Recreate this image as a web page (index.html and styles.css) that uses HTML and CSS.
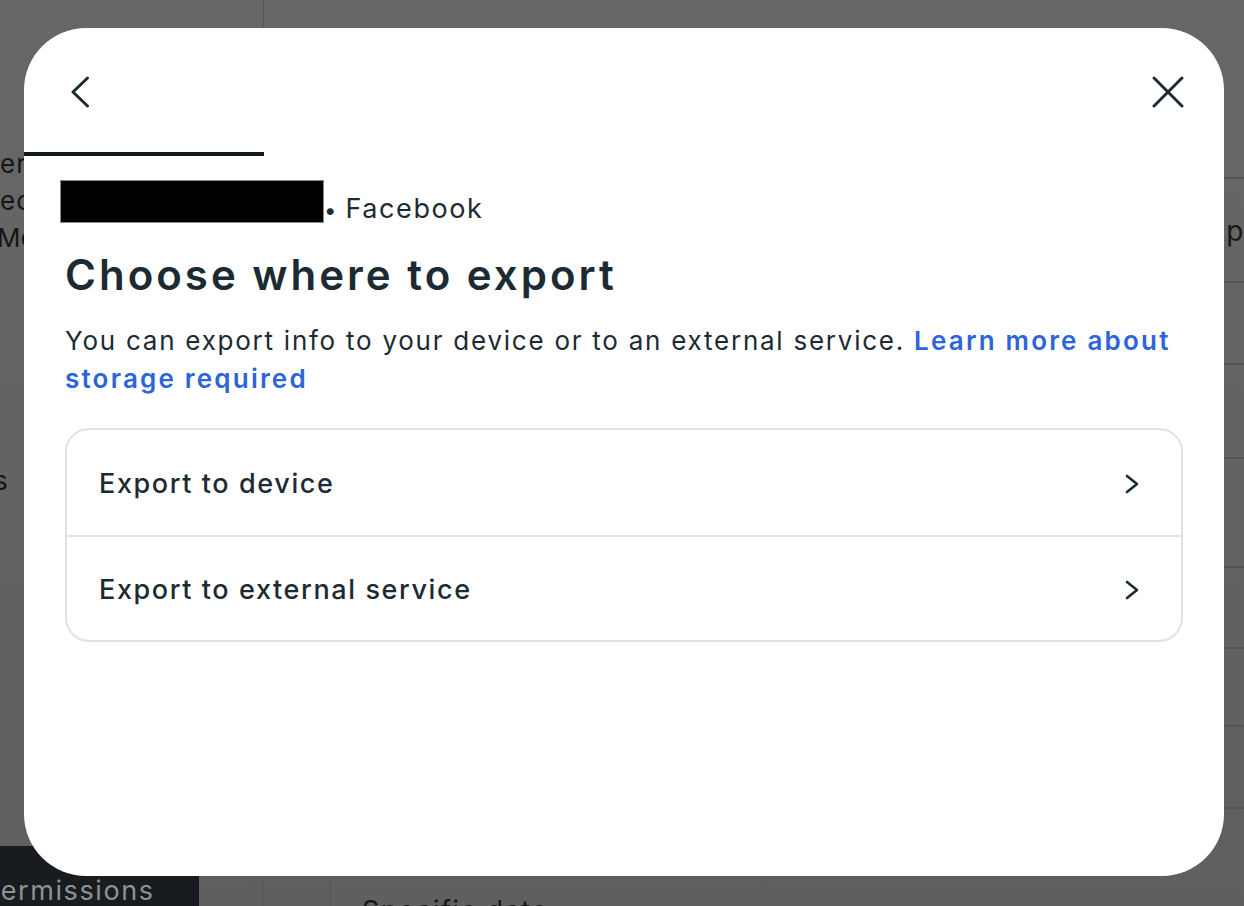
FILE: index.html
```html
<!DOCTYPE html>
<html lang="en">
<head>
<meta charset="utf-8">
<title>Choose where to export</title>
<link rel="stylesheet" href="styles.css">
</head>
<body>
<div class="page">
  <aside class="sidebar">
    <div class="side-text">
      <p class="side-line">ers, pages and</p>
      <p class="side-line">ected experiences</p>
      <p class="side-line side-me">Meta technologies</p>
    </div>
    <p class="side-line side-s">s</p>
    <div class="side-active">Permissions</div>
  </aside>
  <div class="rail"><div class="rail-line"></div></div>
  <main class="main">
    <div class="main-foot">Specific date</div>
  </main>
  <div class="edge">
    <div class="edge-row r1">xp</div>
    <div class="edge-row r2"></div>
    <div class="edge-row r3"></div>
    <div class="edge-row r4"></div>
    <div class="edge-row r5"></div>
    <div class="edge-row r6"></div>
    <div class="edge-row r7"></div>
    <div class="edge-row r8"></div>
  </div>
</div>

<div class="modal" role="dialog" aria-label="Choose where to export">
  <div class="modal-head">
    <button class="icon-btn back" aria-label="Back">
      <svg width="20" height="32" viewBox="0 0 20 32"><path d="M17.5 2 L3 16 L17.5 30" fill="none" stroke="#1c2b33" stroke-width="3" stroke-linecap="round" stroke-linejoin="round"/></svg>
    </button>
    <button class="icon-btn close" aria-label="Close">
      <svg width="32" height="32" viewBox="0 0 32 32"><path d="M2 2 L30 30 M30 2 L2 30" fill="none" stroke="#1c2b33" stroke-width="3" stroke-linecap="round"/></svg>
    </button>
  </div>
  <div class="progress"><div class="progress-fill"></div></div>
  <div class="modal-body">
    <div class="account"><span class="redacted"></span><span class="account-app"><span class="dot">•</span>Facebook</span></div>
    <h1 class="title">Choose where to export</h1>
    <p class="desc">You can export info to your device or to an external service. <a class="link" href="#">Learn more about storage required</a></p>
    <ul class="options">
      <li class="option">
        <span class="option-label">Export to device</span>
        <svg class="chev" width="14" height="20" viewBox="0 0 14 20"><path d="M2 2 L12 10 L2 18" fill="none" stroke="#1c2b33" stroke-width="2.6" stroke-linecap="round" stroke-linejoin="round"/></svg>
      </li>
      <li class="option">
        <span class="option-label">Export to external service</span>
        <svg class="chev" width="14" height="20" viewBox="0 0 14 20"><path d="M2 2 L12 10 L2 18" fill="none" stroke="#1c2b33" stroke-width="2.6" stroke-linecap="round" stroke-linejoin="round"/></svg>
      </li>
    </ul>
  </div>
</div>
</body>
</html>
```

FILE: styles.css
```css
* { box-sizing: border-box; }
html, body { margin: 0; padding: 0; }
body {
  width: 1244px;
  height: 906px;
  overflow: hidden;
  background: #636363;
  font-family: Inter, "Noto Sans", sans-serif;
  position: relative;
}

/* background page (dimmed) */
.page {
  display: flex;
  width: 1244px;
  height: 906px;
  background: linear-gradient(180deg, #676767 0%, #5f5f5f 100%);
}
.sidebar {
  width: 264px;
  flex: none;
  border-right: 1px solid #575757;
  display: flex;
  flex-direction: column;
  overflow: hidden;
}
.side-text { padding-top: 145px; }
.side-line {
  margin: 0;
  font-size: 26px;
  line-height: 37px;
  color: #161616;
  white-space: nowrap;
  letter-spacing: 1px;
}
.side-me { margin-left: -3px; letter-spacing: 0; }
.side-s { margin-top: 206px; margin-left: -6px; }
.side-active {
  margin-top: auto;
  width: 199px;
  height: 60px;
  background: #181b1f;
  color: #8e9296;
  font-size: 27px;
  letter-spacing: 1.6px;
  padding-top: 28px;
  text-indent: -18px;
  white-space: nowrap;
  overflow: hidden;
}
.rail {
  width: 67px;
  flex: none;
  display: flex;
  flex-direction: column;
  justify-content: flex-end;
}
.rail-line {
  height: 60px;
  border-right: 1px solid #555;
}
.main {
  flex: 1;
  display: flex;
  flex-direction: column;
  justify-content: flex-end;
}
.main-foot {
  height: 26px;
  padding-left: 31px;
  padding-top: 16px;
  font-size: 27px;
  line-height: 30px;
  letter-spacing: 1.5px;
  color: #151515;
  white-space: nowrap;
  overflow: hidden;
}
.edge {
  width: 20px;
  flex: none;
  padding-top: 177px;
  display: flex;
  flex-direction: column;
  overflow: hidden;
}
.edge-row {
  border-top: 2px solid #545454;
  flex: none;
}
.r1 {
  height: 104px;
  font-size: 28px;
  line-height: 104px;
  color: #161616;
  text-indent: -14px;
  white-space: nowrap;
  letter-spacing: 1px;
}
.r2 { height: 82px; }
.r3 { height: 94px; }
.r4 { height: 109px; }
.r5 { height: 81px; }
.r6 { height: 78px; }
.r7 { height: 82px; }
.r8 { height: 50px; }

/* modal */
.modal {
  position: absolute;
  left: 24px;
  top: 28px;
  width: 1200px;
  height: 848px;
  background: #fff;
  border-radius: 62px;
  overflow: hidden;
  color: #1c2b33;
}
.modal-head {
  height: 124px;
  display: flex;
  justify-content: space-between;
  align-items: flex-start;
  padding: 48px 40px 0 46px;
}
.icon-btn {
  border: 0;
  background: none;
  padding: 0;
  margin: 0;
  display: block;
  cursor: pointer;
}
.icon-btn svg { display: block; }
.progress {
  height: 4px;
  width: 100%;
}
.progress-fill {
  width: 240px;
  height: 4px;
  background: #101a1f;
}
.modal-body {
  padding: 24px 41px 0 41px;
}
.account {
  display: flex;
  align-items: flex-end;
  height: 43px;
  margin-left: -5px;
}
.redacted {
  display: block;
  width: 264px;
  height: 43px;
  background: #000;
  border: 1px solid #8a8a8a;
}
.account-app {
  font-size: 27px;
  line-height: 30px;
  color: #1c2b33;
  letter-spacing: 1.6px;
  margin-bottom: -2px;
  margin-left: 0;
}
.dot {
  font-size: 22px;
  letter-spacing: 0;
  margin-right: 9px;
}
.title {
  margin: 26px 0 0;
  font-size: 42px;
  line-height: 52px;
  font-weight: 600;
  letter-spacing: 3px;
  color: #1c2b33;
}
.desc {
  margin: 21px 0 0;
  font-size: 26px;
  line-height: 38px;
  letter-spacing: 1.75px;
  color: #1c2b33;
}
.link {
  color: #2b65d9;
  font-weight: 600;
  letter-spacing: 2.2px;
  text-decoration: none;
}
.options {
  list-style: none;
  margin: 30px 0 0;
  padding: 0;
  border: 2px solid #dfe2e7;
  border-radius: 24px;
}
.option {
  height: 105px;
  display: flex;
  align-items: center;
  justify-content: space-between;
  padding: 2px 42px 0 32px;
}
.option + .option { border-top: 2px solid #dfe2e7; }
.option-label {
  font-size: 27px;
  font-weight: 500;
  letter-spacing: 1.6px;
  color: #1c2b33;
}
.chev { display: block; }
```
